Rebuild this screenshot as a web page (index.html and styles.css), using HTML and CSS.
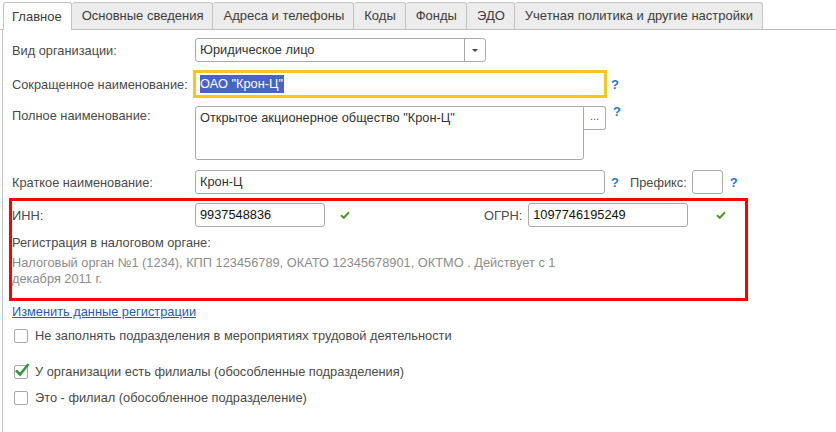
FILE: index.html
```html
<!DOCTYPE html>
<html lang="ru">
<head>
<meta charset="utf-8">
<title>Организация</title>
<link rel="stylesheet" href="styles.css">
</head>
<body>
<div class="tabs">
  <div class="tab active">Главное</div>
  <div class="tab">Основные сведения</div>
  <div class="tab">Адреса и телефоны</div>
  <div class="tab">Коды</div>
  <div class="tab">Фонды</div>
  <div class="tab">ЭДО</div>
  <div class="tab">Учетная политика и другие настройки</div>
</div>
<div class="panel">
  <div class="row">
    <div class="label">Вид организации:</div>
    <div class="select">
      <div class="select-value">Юридическое лицо</div>
      <div class="select-btn"><span class="arrow"></span></div>
    </div>
  </div>
  <div class="row">
    <div class="label">Сокращенное наименование:</div>
    <div class="input wide focused"><span class="sel">ОАО "Крон-Ц"</span></div>
    <span class="help">?</span>
  </div>
  <div class="row top">
    <div class="label label-top">Полное наименование:</div>
    <div class="textarea">Открытое акционерное общество "Крон-Ц"</div>
    <div class="dots">...</div>
    <span class="help help-top">?</span>
  </div>
  <div class="row">
    <div class="label">Краткое наименование:</div>
    <div class="input wide">Крон-Ц</div>
    <span class="help">?</span>
    <span class="prefix-label">Префикс:</span>
    <div class="input prefix"></div>
    <span class="help help-prefix">?</span>
  </div>
  <div class="reg">
    <div class="row inn-row">
      <div class="label">ИНН:</div>
      <div class="input inn">9937548836</div>
      <svg class="ok ok-inn" width="10" height="8" viewBox="0 0 10 8"><path d="M1 4.2 L3.8 6.8 L9 1.2" fill="none" stroke="#4a9a2a" stroke-width="2"/></svg>
      <span class="ogrn-label">ОГРН:</span>
      <div class="input ogrn">1097746195249</div>
      <svg class="ok ok-ogrn" width="10" height="8" viewBox="0 0 10 8"><path d="M1 4.2 L3.8 6.8 L9 1.2" fill="none" stroke="#4a9a2a" stroke-width="2"/></svg>
    </div>
    <div class="reg-title">Регистрация в налоговом органе:</div>
    <div class="reg-text">Налоговый орган №1 (1234), КПП 123456789, ОКАТО 12345678901, ОКТМО . Действует с 1 декабря 2011 г.</div>
  </div>
  <a class="link" href="#">Изменить данные регистрации</a>
  <label class="check c1"><span class="box"></span>Не заполнять подразделения в мероприятиях трудовой деятельности</label>
  <label class="check c2"><span class="box"><svg class="tick" width="16" height="15" viewBox="0 0 16 15"><path d="M2 8.5 L6 12.5 L14.5 2" fill="none" stroke="#2e9a3a" stroke-width="2.6"/></svg></span>У организации есть филиалы (обособленные подразделения)</label>
  <label class="check c3"><span class="box"></span>Это - филиал (обособленное подразделение)</label>
</div>
</body>
</html>
```
FILE: styles.css
```css
* { box-sizing: border-box; }
html, body { margin: 0; padding: 0; background: #fff; }
body {
  font-family: "Liberation Sans", Arial, sans-serif;
  font-size: 12.8px;
  color: #4a4a4a;
  width: 836px;
  height: 432px;
  overflow: hidden;
}
.tabs {
  display: flex;
  align-items: flex-end;
  padding-left: 3px;
  height: 30px;
  border-bottom: 1px solid #bdbdbd;
}
.tab {
  height: 27px;
  padding: 0 9px 0 10px;
  line-height: 26px;
  font-size: 13px;
  background: #ececec;
  border: 1px solid #c3c3c3;
  border-bottom: none;
  border-left: none;
  border-radius: 3px 3px 0 0;
  color: #3c3c3c;
}
.tab.active {
  background: #fff;
  border-left: 1px solid #c3c3c3;
  height: 28px;
  margin-bottom: -1px;
  padding: 0 9px 0 8px;
  line-height: 27px;
}
.panel {
  border-left: 1px solid #c3c3c3;
  margin-left: 2px;
  height: 402px;
  padding: 8px 0 0 9px;
  display: flex;
  flex-direction: column;
}
.row {
  display: flex;
  align-items: center;
  margin-bottom: 10px;
}
.row.top { align-items: flex-start; }
.label {
  width: 183px;
  flex: none;
  white-space: nowrap;
}
.label-top { padding-top: 2px; }
.select {
  width: 291px;
  height: 24px;
  border: 1px solid #aaa;
  border-radius: 3px;
  display: flex;
}
.select-value {
  flex: 1;
  padding-left: 4px;
  line-height: 22px;
  color: #333;
}
.select-btn {
  width: 21px;
  border-left: 1px solid #aaa;
  display: flex;
  align-items: center;
  justify-content: center;
}
.arrow {
  width: 0; height: 0;
  border-left: 3px solid transparent;
  border-right: 3px solid transparent;
  border-top: 3px solid #444;
}
.input {
  height: 24px;
  border: 1px solid #aaa;
  border-radius: 3px;
  padding-left: 4px;
  line-height: 22px;
  color: #333;
  flex: none;
}
.input.wide { width: 410px; }
.input.focused {
  border: 1px solid #aaa;
  outline: 3px solid #f7c51c;
  border-radius: 0;
  outline-offset: -1px;
}
.sel {
  background: #4863c8;
  color: #fff;
  padding: 1px 1px 2px 0;
}
.help {
  color: #1d7ccc;
  font-weight: bold;
  font-size: 13px;
  margin-left: 6px;
}
.help-top { margin-left: 7px; margin-top: -2px; }
.textarea {
  width: 389px;
  height: 54px;
  border: 1px solid #aaa;
  border-radius: 3px 0 3px 3px;
  padding: 3px 4px;
  color: #333;
  flex: none;
}
.dots {
  width: 22px;
  height: 24px;
  border: 1px solid #aaa;
  border-left: none;
  border-radius: 0 3px 3px 0;
  text-align: center;
  line-height: 18px;
  font-size: 11px;
  color: #555;
  flex: none;
}
.prefix-label { margin-left: 11px; color: #4a4a4a; }
.input.prefix { width: 31px; margin-left: 5px; }
.help-prefix { margin-left: 7px; }
.reg {
  margin-left: -3px;
  margin-top: -6px;
  width: 739px;
  height: 103px;
  border: 3px solid #f00;
  padding: 2px 0 0 0;
}
.inn-row { margin-bottom: 0; }
.input.inn { width: 130px; color: #111; }
.ok-inn { margin-left: 15px; }
.ogrn-label { margin-left: 134px; }
.input.ogrn { width: 160px; margin-left: 6px; color: #111; }
.ok-ogrn { margin-left: 28px; }
.reg-title { margin-top: 8px; line-height: 16px; }
.reg-text {
  margin-top: 4px;
  line-height: 16px;
  width: 580px;
  color: #8c8c8c;
}
.link {
  margin-top: 3px;
  color: #1f5eb5;
  text-decoration: underline;
  align-self: flex-start;
  line-height: 16px;
}
.check {
  display: flex;
  align-items: center;
  line-height: 16px;
}
.c1 { margin-top: 8px; }
.c2 { margin-top: 20px; }
.c3 { margin-top: 10px; }
.box {
  width: 14px;
  height: 14px;
  border: 1px solid #a8a8a8;
  border-radius: 2px;
  margin: 0 7px 0 2px;
  position: relative;
  flex: none;
}
.tick {
  position: absolute;
  left: -1px;
  top: -4px;
}
```
